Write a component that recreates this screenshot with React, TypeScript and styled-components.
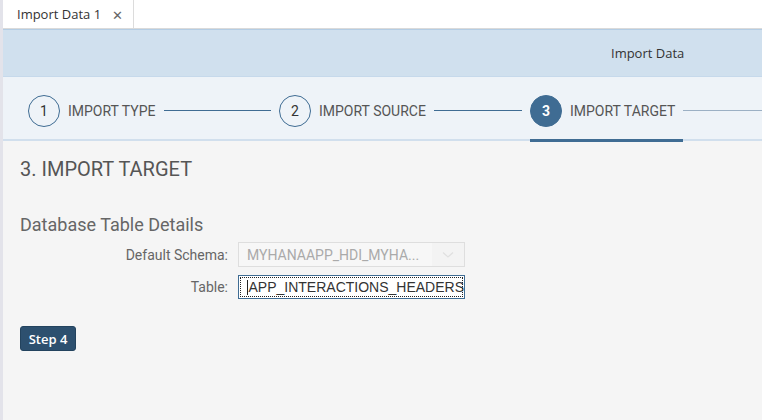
import styled, { createGlobalStyle } from 'styled-components';

const GlobalStyle = createGlobalStyle`
  html, body {
    margin: 0;
    padding: 0;
    background: #f5f5f5;
  }
  body {
    font-family: "Open Sans", "Noto Sans", sans-serif;
    color: #333;
  }
`;

const Page = styled.div`
  display: flex;
  flex-direction: column;
  height: 420px;
  overflow: hidden;
  border-left: 3px solid #e3e3ea;
  background: #f5f5f5;
`;

const TabBar = styled.div`
  display: flex;
  height: 28px;
  background: #fff;
  border-bottom: 1px solid #dadada;
`;

const Tab = styled.div`
  display: flex;
  align-items: center;
  gap: 11px;
  width: 131px;
  box-sizing: border-box;
  padding-left: 14px;
  border-right: 1px solid #dcdcdc;
  font-size: 13px;
  color: #333;
`;

const TabClose = styled.span`
  font-size: 13px;
  color: #666;
  margin-top: 1px;
`;

const Header = styled.div`
  height: 46px;
  display: flex;
  align-items: center;
  padding-left: 608px;
  background: #d0e0ee;
  border-top: 1px solid #b4cde4;
  border-bottom: 1px solid #c6d9eb;
  font-size: 13px;
  color: #333;
`;

const Wizard = styled.div`
  height: 57px;
  display: flex;
  align-items: center;
  padding: 5px 0 0 25px;
  background: #eef3f8;
  border-bottom: 2px solid #d1dfed;
`;

const Step = styled.div`
  flex: 0 0 251px;
  display: flex;
  align-items: center;
  height: 100%;
`;

const StepHead = styled.div<{ $active?: boolean }>`
  position: relative;
  display: flex;
  align-items: center;
  height: 100%;
  padding-right: 8px;

  &::after {
    content: '';
    display: ${p => (p.$active ? 'block' : 'none')};
    position: absolute;
    left: 0;
    right: 0;
    bottom: -3px;
    height: 3px;
    background: #3f6c93;
  }
`;

const Circle = styled.div<{ $active?: boolean }>`
  width: 32px;
  height: 32px;
  box-sizing: border-box;
  border-radius: 50%;
  display: flex;
  align-items: center;
  justify-content: center;
  border: 1px solid #3f6c93;
  background: ${p => (p.$active ? '#3f6c93' : 'transparent')};
  color: ${p => (p.$active ? '#fff' : '#333')};
  font-family: Roboto, sans-serif;
  font-size: 14px;
  font-weight: ${p => (p.$active ? 700 : 400)};
`;

const StepLabel = styled.span`
  margin-left: 8px;
  font-family: Roboto, sans-serif;
  font-size: 14px;
  color: #555;
  text-transform: uppercase;
  white-space: nowrap;
`;

const Connector = styled.div<{ $pending?: boolean }>`
  flex: 1;
  height: 1px;
  margin-right: 8px;
  background: ${p => (p.$pending ? '#9cb0c4' : '#3f6c93')};
`;

const Content = styled.div`
  padding: 15px 17px 0;
  display: flex;
  flex-direction: column;
`;

const Title = styled.h2`
  margin: 0;
  font-family: Roboto, sans-serif;
  font-size: 20px;
  line-height: 26px;
  font-weight: 400;
  color: #555;
`;

const SectionTitle = styled.h3`
  margin: 31px 0 5px;
  font-family: Roboto, sans-serif;
  font-size: 18px;
  line-height: 24px;
  font-weight: 400;
  color: #666;
`;

const Form = styled.div`
  display: grid;
  grid-template-columns: 208px 227px;
  column-gap: 10px;
  row-gap: 8px;
  align-items: center;
`;

const Label = styled.label`
  text-align: right;
  font-family: Roboto, sans-serif;
  font-size: 14px;
  color: #666;
`;

const Select = styled.div`
  display: flex;
  height: 25px;
  box-sizing: border-box;
  border: 1px solid #dedede;
  background: #f7f7f7;
`;

const SelectValue = styled.span`
  flex: 1;
  padding-left: 8px;
  display: flex;
  align-items: center;
  font-family: Roboto, sans-serif;
  font-size: 14px;
  color: #aaa;
`;

const SelectArrow = styled.span`
  width: 32px;
  display: flex;
  align-items: center;
  justify-content: center;
  background: #f3f3f3;
`;

const TextInput = styled.div`
  position: relative;
  height: 24px;
  box-sizing: border-box;
  border: 1px solid #3f6c93;
  background: #fff;
  display: flex;
  align-items: center;
  padding-left: 8px;
  font-family: "Liberation Sans", Arial, sans-serif;
  font-size: 14px;
  color: #333;

  &::after {
    content: '';
    position: absolute;
    inset: 1px;
    border: 1px dotted #222;
  }
`;

const Caret = styled.span`
  width: 1px;
  height: 15px;
  background: #222;
  margin-right: 1px;
`;

const StepButton = styled.button`
  align-self: flex-start;
  margin-top: 27px;
  height: 25px;
  width: 56px;
  padding: 0;
  border: 1px solid #23435e;
  border-radius: 3px;
  background: #2d506f;
  color: #fff;
  font-family: "Open Sans", sans-serif;
  font-size: 13px;
  font-weight: 600;
`;

const steps = [
  { n: 1, label: 'Import Type' },
  { n: 2, label: 'Import Source' },
  { n: 3, label: 'Import Target', active: true },
];

export default function App() {
  return (
    <>
      <GlobalStyle />
      <Page>
        <TabBar>
          <Tab>
            Import Data 1<TabClose>✕</TabClose>
          </Tab>
        </TabBar>
        <Header>Import Data</Header>
        <Wizard>
          {steps.map(s => (
            <Step key={s.n}>
              <StepHead $active={s.active}>
                <Circle $active={s.active}>{s.n}</Circle>
                <StepLabel>{s.label}</StepLabel>
              </StepHead>
              <Connector $pending={s.active} />
            </Step>
          ))}
        </Wizard>
        <Content>
          <Title>3. IMPORT TARGET</Title>
          <SectionTitle>Database Table Details</SectionTitle>
          <Form>
            <Label>Default Schema:</Label>
            <Select>
              <SelectValue>MYHANAAPP_HDI_MYHA...</SelectValue>
              <SelectArrow>
                <svg width="12" height="8" viewBox="0 0 12 8">
                  <path d="M1 1.5 L6 6 L11 1.5" fill="none" stroke="#e0e0e0" strokeWidth="1.3" />
                </svg>
              </SelectArrow>
            </Select>
            <Label>Table:</Label>
            <TextInput>
              <Caret />
              APP_INTERACTIONS_HEADERS
            </TextInput>
          </Form>
          <StepButton>Step 4</StepButton>
        </Content>
      </Page>
    </>
  );
}
